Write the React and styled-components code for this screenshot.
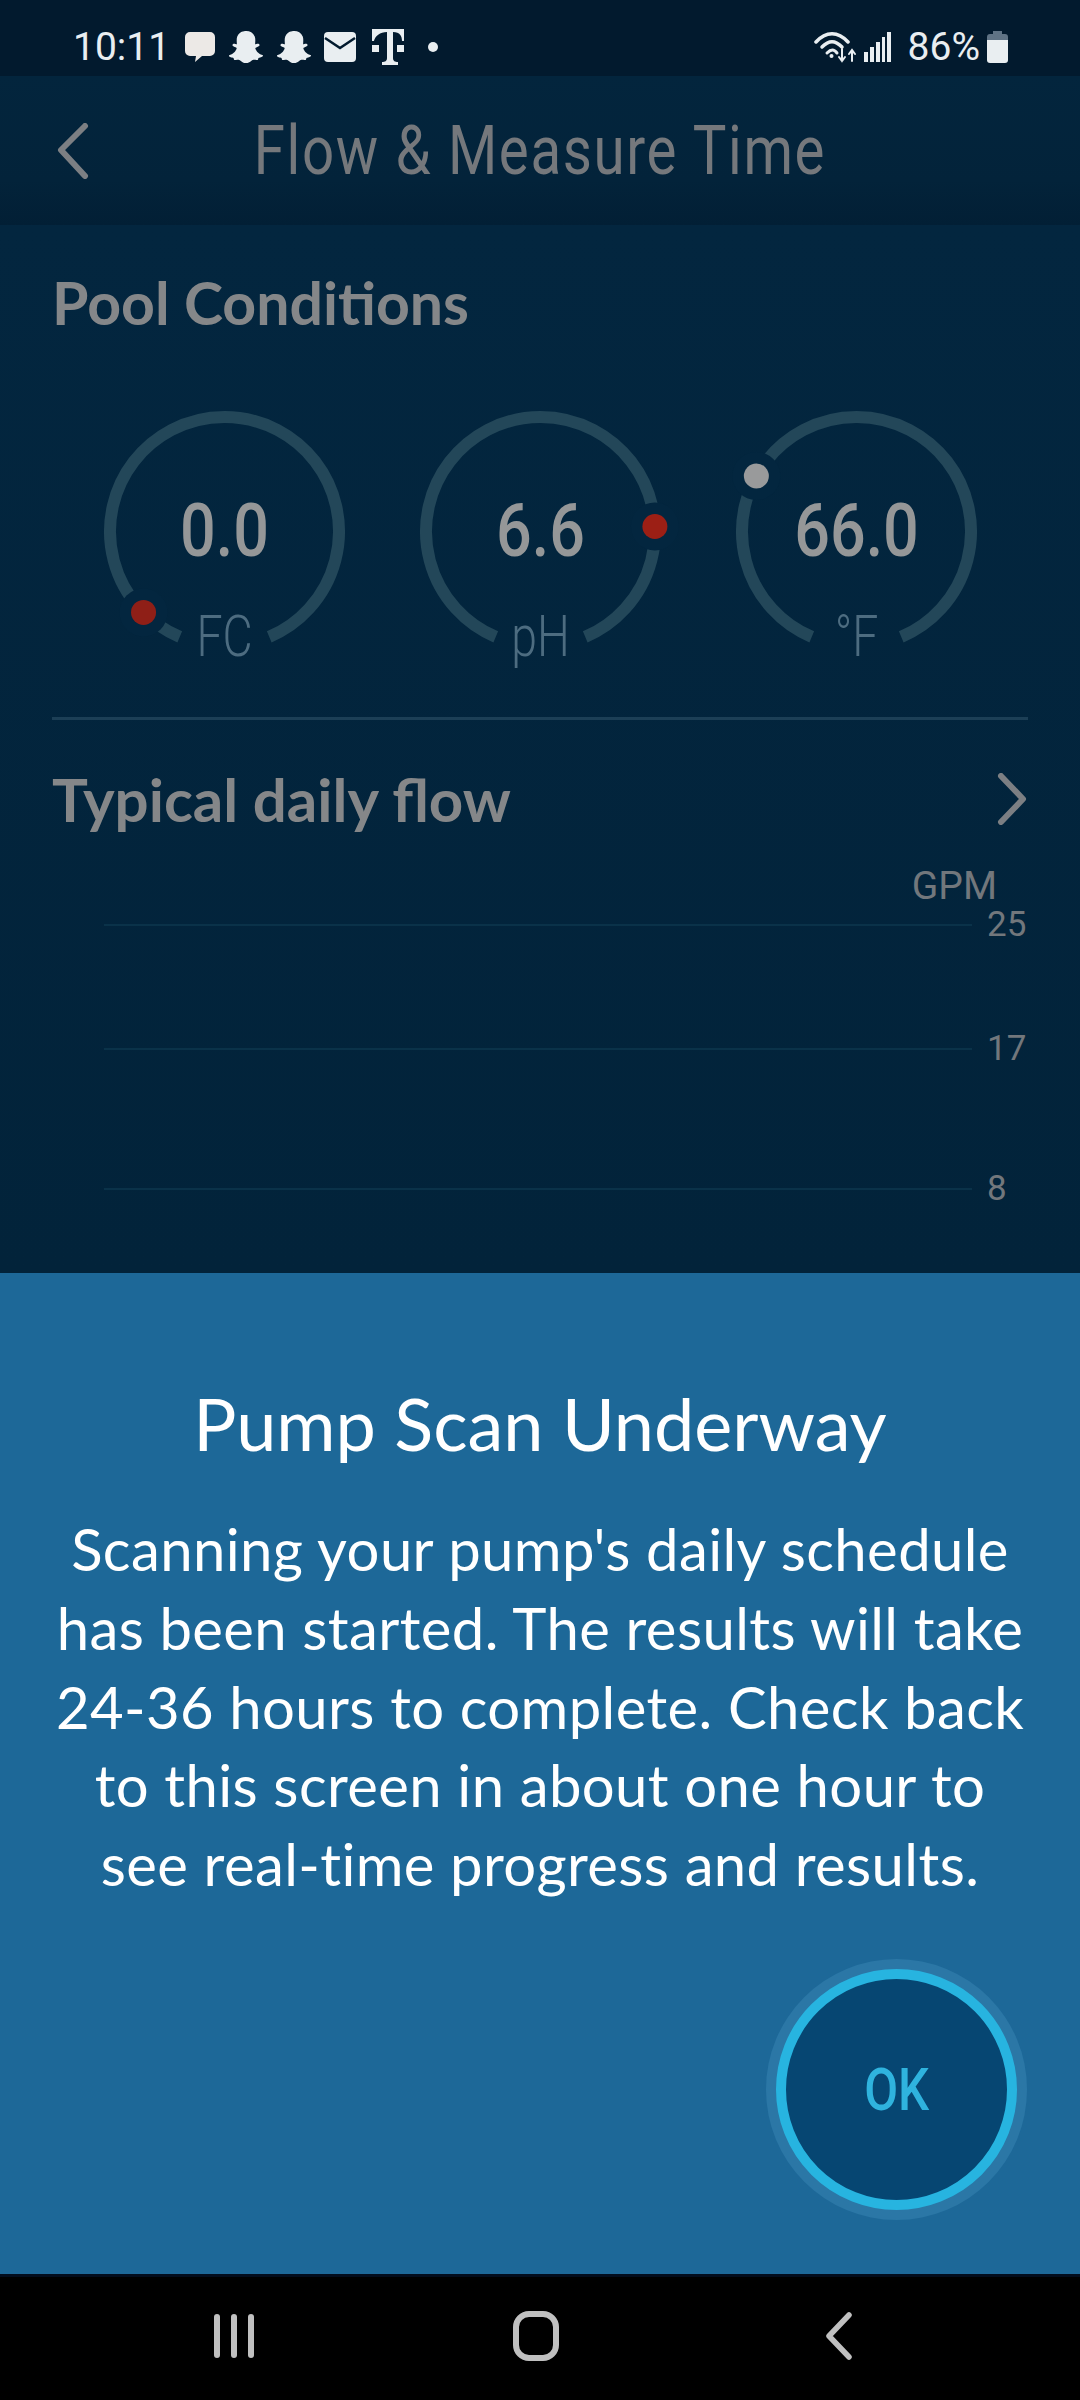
import React from "react";
import styled, { createGlobalStyle } from "styled-components";
import { FaSnapchatGhost } from "react-icons/fa";

const GlobalStyle = createGlobalStyle`
  html, body {
    margin: 0;
    padding: 0;
    background: #000;
  }
  * {
    box-sizing: border-box;
  }
`;

const Screen = styled.div`
  width: 1080px;
  height: 2400px;
  display: flex;
  flex-direction: column;
  overflow: hidden;
  background: #03253d;
`;

/* status bar */
const StatusBar = styled.div`
  height: 76px;
  flex: none;
  display: flex;
  align-items: center;
  padding: 18px 72px 0 73px;
  background: #021a2e;
  color: #e9eef1;
  font-family: Roboto, sans-serif;
`;
const StatusTime = styled.span`
  font-size: 39px;
  width: 111px;
  line-height: 1;
`;
const StatusIcons = styled.div`
  display: flex;
  align-items: center;
  gap: 12px;
`;
const Ghost = styled(FaSnapchatGhost)`
  width: 36px;
  height: 34px;
  color: #e9eef1;
`;
const Dot = styled.span`
  width: 10px;
  height: 10px;
  border-radius: 50%;
  background: #e9eef1;
  margin-left: 11px;
`;
const StatusRight = styled.div`
  margin-left: auto;
  display: flex;
  align-items: center;
  gap: 6px;
`;
const Percent = styled.span`
  font-size: 39px;
  line-height: 1;
  margin-left: 11px;
`;

/* header */
const Header = styled.div`
  height: 149px;
  flex: none;
  position: relative;
  display: flex;
  align-items: center;
  justify-content: center;
  background: linear-gradient(#03253d, #03233a 70%, #021f35);
`;
const BackButton = styled.svg`
  position: absolute;
  left: 56px;
  top: 47px;
  width: 34px;
  height: 56px;
`;
const Title = styled.h1`
  margin: 0;
  font-family: Roboto, sans-serif;
  font-weight: 400;
  font-size: 68px;
  line-height: 1;
  color: #75787c;
  white-space: nowrap;
  transform: scaleX(0.83);
  letter-spacing: 2px;
`;

/* page behind the sheet */
const Content = styled.div`
  flex: 1;
  padding: 46px 52px 0;
  background: linear-gradient(#03263f, #02233a);
  overflow: hidden;
`;
const Heading = styled.h2`
  margin: 0;
  font-family: Lato, sans-serif;
  font-weight: 700;
  font-size: ${(p) => p.$size}px;
  line-height: 64px;
  color: #858789;
`;
const GaugeRow = styled.div`
  display: flex;
  gap: 75px;
  padding-left: 52px;
  margin-top: 76px;
`;
const GaugeBox = styled.div`
  position: relative;
  width: 241px;
  height: 250px;
  flex: none;
`;
const GaugeArc = styled.svg`
  width: 241px;
  height: 241px;
  display: block;
  overflow: visible;
`;
const GaugeValue = styled.div`
  position: absolute;
  left: 0;
  right: 0;
  top: 82px;
  text-align: center;
  font-family: Roboto, sans-serif;
  font-weight: 500;
  font-size: 74px;
  line-height: 76px;
  color: #959798;
  transform: scaleX(0.85);
`;
const GaugeLabel = styled.div`
  position: absolute;
  left: 0;
  right: 0;
  top: 195px;
  text-align: center;
  font-family: Roboto, sans-serif;
  font-weight: 300;
  font-size: 58px;
  line-height: 60px;
  color: #4d6c80;
  transform: scaleX(0.8);
`;
const Divider = styled.div`
  height: 3px;
  margin-top: 56px;
  background: #1c3f56;
`;
const FlowHead = styled.div`
  display: flex;
  align-items: center;
  justify-content: space-between;
  margin-top: 47px;
`;
const Chevron = styled.svg`
  width: 30px;
  height: 52px;
  margin-right: 1px;
`;
const Unit = styled.div`
  text-align: right;
  padding-right: 31px;
  margin-top: 33px;
  font-family: Roboto, sans-serif;
  font-size: 39px;
  line-height: 44px;
  color: #72777c;
`;
const ChartRow = styled.div`
  display: flex;
  align-items: center;
  gap: 15px;
  height: 40px;
  padding-left: 52px;
  margin-top: ${(p) => p.$top}px;
`;
const ChartLine = styled.div`
  width: 868px;
  height: 2px;
  flex: none;
  background: #0a3249;
`;
const ChartTick = styled.span`
  font-family: Roboto, sans-serif;
  font-size: 35px;
  line-height: 40px;
  color: #72777c;
`;

/* bottom sheet */
const Sheet = styled.div`
  height: 1001px;
  flex: none;
  display: flex;
  flex-direction: column;
  align-items: center;
  padding-top: 108px;
  background: #1d6898;
  color: #fff;
`;
const SheetTitle = styled.h2`
  margin: 0;
  font-family: Lato, sans-serif;
  font-weight: 400;
  font-size: 72px;
  line-height: 84px;
`;
const SheetText = styled.p`
  margin: 45px 0 0;
  width: 1040px;
  font-family: Lato, sans-serif;
  font-size: 58px;
  letter-spacing: 0.4px;
  line-height: 78.8px;
  text-align: center;
`;
const SheetActions = styled.div`
  align-self: stretch;
  display: flex;
  justify-content: flex-end;
  padding-right: 63px;
  margin-top: 65px;
`;
const OkButton = styled.button`
  width: 241px;
  height: 241px;
  padding: 0;
  border-radius: 50%;
  border: 10px solid #27b4e0;
  background: #064672;
  box-shadow: 0 0 0 10px #2b77a6;
  color: #2fb3de;
  font-family: Roboto, sans-serif;
  font-weight: 500;
  font-size: 60px;
`;
const OkLabel = styled.span`
  display: inline-block;
  transform: scaleX(0.82);
`;

/* android nav */
const NavBar = styled.div`
  height: 126px;
  flex: none;
  display: flex;
  align-items: center;
  background: #000;
  border-top: 3px solid #020c1c;
  padding: 0 0 6px 214px;
`;
const NavIcon = styled.svg`
  height: 50px;
  display: block;
  margin-left: ${(p) => p.$left || 0}px;
`;

const Gauge = ({ value, label, angle, color }) => {
  const c = 120.5;
  const r = 114.5;
  const polar = (deg) => {
    const a = (deg * Math.PI) / 180;
    return [c + r * Math.cos(a), c + r * Math.sin(a)];
  };
  // degrees run clockwise from 3 o'clock; the gap sits at the bottom
  const [x1, y1] = polar(113);
  const [x2, y2] = polar(67);
  const [dx, dy] = polar(angle);
  return (
    <GaugeBox>
      <GaugeArc viewBox="0 0 241 241">
        <path
          d={`M${x1} ${y1}A${r} ${r} 0 1 1 ${x2} ${y2}`}
          fill="none"
          stroke="#234759"
          strokeWidth="12"
        />
        <circle cx={dx} cy={dy} r="24" fill="#03263f" />
        <circle cx={dx} cy={dy} r="12.5" fill={color} />
      </GaugeArc>
      <GaugeValue>{value}</GaugeValue>
      <GaugeLabel>{label}</GaugeLabel>
    </GaugeBox>
  );
};

export default function App() {
  return (
    <Screen>
      <GlobalStyle />
      <StatusBar>
        <StatusTime>10:11</StatusTime>
        <StatusIcons>
          <svg width="32" height="32" viewBox="0 0 32 32">
            <path
              d="M6 1h20a5 5 0 0 1 5 5v14a5 5 0 0 1-5 5h-8l-7 6 1-6H6a5 5 0 0 1-5-5V6a5 5 0 0 1 5-5z"
              fill="#ece9e6"
            />
          </svg>
          <Ghost />
          <Ghost />
          <svg width="32" height="30" viewBox="0 0 32 30">
            <rect width="32" height="30" rx="4" fill="#e9eef1" />
            <path d="M1 6l15 10L31 6" fill="none" stroke="#021a2e" strokeWidth="2.5" />
          </svg>
          <svg width="34" height="38" viewBox="0 0 34 38" style={{ marginLeft: 3 }}>
            <path
              d="M1 1h32v12h-2c0-5-2-9-9-9v26c0 3 2 4 5 4v3H11v-3c3 0 5-1 5-4V4C9 4 4 8 3 13H1z"
              fill="#e9eef1"
            />
            <rect x="1" y="17" width="7" height="7" fill="#e9eef1" />
            <rect x="26" y="17" width="7" height="7" fill="#e9eef1" />
          </svg>
          <Dot />
        </StatusIcons>
        <StatusRight>
          <svg width="44" height="32" viewBox="0 0 44 32" fill="none" stroke="#e9eef1" strokeLinecap="round">
            <path d="M2 11C12 0 24 0 34 11" strokeWidth="3.5" />
            <path d="M8 16c7-7 13-7 20 0" strokeWidth="3.5" />
            <path d="M13 22c4-4 7-4 10 0" strokeWidth="3" />
            <circle cx="17.5" cy="25" r="2" fill="#e9eef1" stroke="none" />
            <path d="M28 18v12m-3-4l3 4 3-4M38 30V19m-3 4l3-4 3 4" strokeWidth="2" />
          </svg>
          <svg width="27" height="30" viewBox="0 0 27 30" fill="#e9eef1">
            <rect x="0" y="20" width="4" height="10" />
            <rect x="6" y="15" width="4" height="15" />
            <rect x="12" y="10" width="4" height="20" />
            <rect x="18" y="5" width="3" height="25" />
            <rect x="23" y="0" width="4" height="30" />
          </svg>
          <Percent>86%</Percent>
          <svg width="21" height="32" viewBox="0 0 21 32" style={{ marginLeft: 1 }}>
            <path d="M6 0h9v3h3a3 3 0 0 1 3 3v4H0V6a3 3 0 0 1 3-3h3z" fill="#5f7385" />
            <path d="M0 9h21v20a3 3 0 0 1-3 3H3a3 3 0 0 1-3-3z" fill="#e9eef1" />
          </svg>
        </StatusRight>
      </StatusBar>

      <Header>
        <BackButton viewBox="0 0 34 56" fill="none" stroke="#7c7f83" strokeWidth="6" strokeLinecap="round" strokeLinejoin="round">
          <path d="M29 3L5 27l24 26" />
        </BackButton>
        <Title>Flow &amp; Measure Time</Title>
      </Header>

      <Content>
        <Heading $size={59}>Pool Conditions</Heading>
        <GaugeRow>
          <Gauge value="0.0" label="FC" angle={135} color="#8f1f17" />
          <Gauge value="6.6" label="pH" angle={-2.5} color="#9c1f15" />
          <Gauge value="66.0" label="°F" angle={209} color="#999a9b" />
        </GaugeRow>
        <Divider />
        <FlowHead>
          <Heading $size={60}>Typical daily flow</Heading>
          <Chevron viewBox="0 0 30 52" fill="none" stroke="#7c7f83" strokeWidth="6" strokeLinecap="round" strokeLinejoin="round">
            <path d="M4 3l22 23L4 49" />
          </Chevron>
        </FlowHead>
        <Unit>GPM</Unit>
        <ChartRow $top={-3}>
          <ChartLine />
          <ChartTick>25</ChartTick>
        </ChartRow>
        <ChartRow $top={84}>
          <ChartLine />
          <ChartTick>17</ChartTick>
        </ChartRow>
        <ChartRow $top={100}>
          <ChartLine />
          <ChartTick>8</ChartTick>
        </ChartRow>
      </Content>

      <Sheet>
        <SheetTitle>Pump Scan Underway</SheetTitle>
        <SheetText>
          Scanning your pump's daily schedule
          <br />
          has been started. The results will take
          <br />
          24-36 hours to complete. Check back
          <br />
          to this screen in about one hour to
          <br />
          see real-time progress and results.
        </SheetText>
        <SheetActions>
          <OkButton>
            <OkLabel>OK</OkLabel>
          </OkButton>
        </SheetActions>
      </Sheet>

      <NavBar>
        <NavIcon width="40" viewBox="0 0 40 50" fill="#c0c0c0">
          <rect x="0" y="3" width="6" height="44" rx="3" />
          <rect x="17" y="3" width="6" height="44" rx="3" />
          <rect x="34" y="3" width="6" height="44" rx="3" />
        </NavIcon>
        <NavIcon $left={259} width="46" viewBox="0 0 46 50" fill="none" stroke="#c0c0c0" strokeWidth="6">
          <rect x="3" y="3" width="40" height="44" rx="13" />
        </NavIcon>
        <NavIcon $left={267} width="26" viewBox="0 0 26 50" fill="none" stroke="#c0c0c0" strokeWidth="5.5" strokeLinecap="round" strokeLinejoin="round">
          <path d="M23 4L3 25l20 21" />
        </NavIcon>
      </NavBar>
    </Screen>
  );
}
